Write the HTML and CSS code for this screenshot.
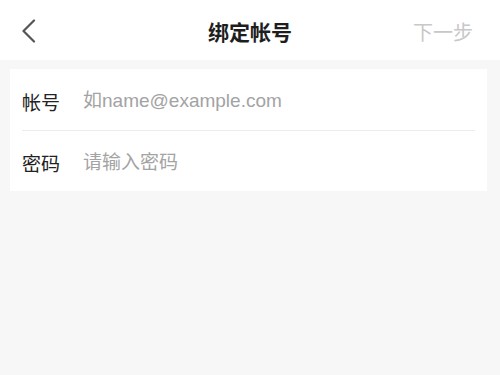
FILE: index.html
```html
<!DOCTYPE html>
<html lang="zh-CN">
<head>
    <meta charset="UTF-8">
    <meta name="viewport" content="width=device-width, initial-scale=1.0">
    <title>绑定帐号</title>
    <link rel="stylesheet" href="styles.css">
</head>
<body>

    <header class="nav-bar">
        <a class="nav-back" href="#">
            <svg width="16" height="24" viewBox="0 0 16 24">
                <path d="M13 1.5 L2.5 12 L13 22.5" fill="none" stroke="#555" stroke-width="2.2" stroke-linecap="round" stroke-linejoin="round"/>
            </svg>
        </a>
        <h1 class="nav-title">绑定帐号</h1>
        <span class="nav-next">下一步</span>
    </header>

    <main class="page">
        <form class="form-card">
            <div class="form-row">
                <label for="account">帐号</label>
                <input type="text" id="account" placeholder="如name@example.com">
            </div>
            <div class="form-row">
                <label for="password">密码</label>
                <input type="password" id="password" placeholder="请输入密码">
            </div>
        </form>
    </main>

</body>
</html>
```

FILE: styles.css
```css
* {
    margin: 0;
    padding: 0;
    box-sizing: border-box;
}

body {
    background-color: #f7f7f7;
    color: #222;
    font-family: "Liberation Sans", "Noto Sans CJK SC", sans-serif;
    min-height: 100vh;
}

.nav-bar {
    height: 60px;
    background-color: #fff;
    display: flex;
    align-items: center;
    justify-content: space-between;
    padding: 2px 27px 0 21px;
    position: relative;
}

.nav-back {
    display: flex;
    align-items: center;
}

.nav-title {
    position: absolute;
    left: 0;
    right: 0;
    text-align: center;
    font-size: 21px;
    font-weight: bold;
    color: #1e1e1e;
    pointer-events: none;
}

.nav-next {
    font-size: 20px;
    color: #c8c8c8;
}

.page {
    padding: 9px 13px 0 10px;
}

.form-card {
    background-color: #fff;
    padding: 0 12px;
}

.form-row {
    height: 62px;
    padding-top: 3px;
    display: flex;
    align-items: center;
    border-bottom: 1px solid #ececec;
}

.form-row:last-child {
    height: 60px;
    border-bottom: none;
}

label {
    width: 61px;
    font-size: 19px;
    color: #222;
}

input {
    flex: 1;
    border: none;
    outline: none;
    background: transparent;
    font-family: inherit;
    font-size: 19px;
    color: #222;
}

input::placeholder {
    color: #a3a3a3;
}
```
